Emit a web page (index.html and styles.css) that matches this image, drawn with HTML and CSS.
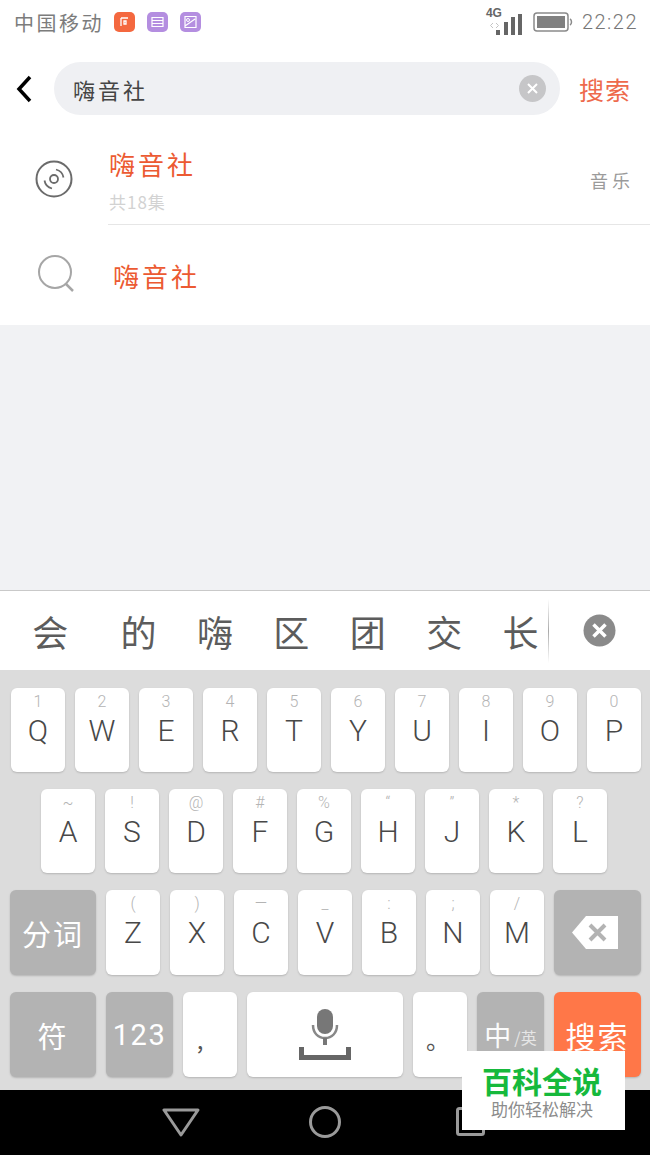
FILE: index.html
```html
<!DOCTYPE html>
<html lang="zh">
<head>
	<meta charset="utf-8">
	<title>嗨音社</title>
	<link rel="stylesheet" href="styles.css">
</head>
<body>
<div class="page">

	<div class="status">
		<span class="carrier">中国移动</span>
		<span class="app-icon orange"><svg width="21" height="20" viewBox="0 0 21 20"><path d="M7 6h7M7 6v8M10 9h2v3h-2z" fill="none" stroke="#fff" stroke-width="1.300"/></svg></span>
		<span class="app-icon purple"><svg width="21" height="20" viewBox="0 0 21 20"><path d="M5 5.500h11v9H5zM5 8.500h11M5 11.500h11" fill="none" stroke="#fff" stroke-width="1.200"/></svg></span>
		<span class="app-icon purple"><svg width="21" height="20" viewBox="0 0 21 20"><path d="M5 4.500h11v11H5zM5 14l10-7" fill="none" stroke="#fff" stroke-width="1.200"/><circle cx="8" cy="8" r="1.500" fill="none" stroke="#fff"/></svg></span>
		<span class="status-right">
			<span class="signal">
				<span class="net">4G</span>
				<svg width="36" height="26" viewBox="0 0 36 26"><path d="M7 14l-2.500 2.500L7 19M10 14l2.500 2.500L10 19" fill="none" stroke="#c4c4c4"/><rect x="10" y="21" width="4" height="5" fill="#666"/><rect x="18" y="13" width="4" height="13" fill="#666"/><rect x="25" y="8" width="4" height="18" fill="#666"/><rect x="32" y="5" width="4" height="21" fill="#666"/></svg>
			</span>
			<svg class="battery" width="40" height="22" viewBox="0 0 40 22"><rect x="1" y="2" width="34" height="18" rx="3" fill="none" stroke="#8a8a8a" stroke-width="1.500"/><rect x="4" y="5" width="28" height="12" fill="#808080"/><path d="M37 8c2 1 2 5 0 6" fill="none" stroke="#8a8a8a" stroke-width="1.500"/></svg>
			<span class="clock">22:22</span>
		</span>
	</div>

	<div class="search-row">
		<svg class="back" width="18" height="28" viewBox="0 0 18 28"><path d="M15 2L4 14l11 12" fill="none" stroke="#000" stroke-width="3.500"/></svg>
		<div class="search-box">
			<span class="query">嗨音社</span>
			<svg width="27" height="27" viewBox="0 0 27 27"><circle cx="13.500" cy="13.500" r="13.500" fill="#c6c6c8"/><path d="M9 9l9 9M18 9l-9 9" stroke="#fff" stroke-width="2"/></svg>
		</div>
		<span class="search-btn">搜索</span>
	</div>

	<div class="results">
		<div class="result">
			<div class="result-icon">
				<svg width="38" height="38" viewBox="0 0 38 38"><circle cx="19" cy="19" r="17.500" fill="none" stroke="#6b6b6b" stroke-width="2"/><circle cx="19" cy="19" r="4" fill="none" stroke="#6b6b6b" stroke-width="1.800"/><path d="M21 9.500a10 10 0 0 1 7.500 8M17 28.500a10 10 0 0 1-7.500-8" fill="none" stroke="#6b6b6b" stroke-width="1.800"/></svg>
			</div>
			<div class="result-body">
				<div class="result-text">
					<div class="result-title">嗨音社</div>
					<div class="result-sub">共18集</div>
				</div>
				<span class="result-tag">音乐</span>
			</div>
		</div>
		<div class="result last">
			<div class="result-icon">
				<svg width="40" height="40" viewBox="0 0 40 40"><circle cx="18" cy="17" r="16" fill="none" stroke="#a6a6a6" stroke-width="2"/><path d="M29 29l7 7" stroke="#a6a6a6" stroke-width="2.500"/></svg>
			</div>
			<div class="result-title plain">嗨音社</div>
		</div>
	</div>

	<div class="blank"></div>

	<div class="candidates">
		<div class="cand-list">
			<span class="cand first">会</span>
			<span class="cand">的</span>
			<span class="cand">嗨</span>
			<span class="cand">区</span>
			<span class="cand">团</span>
			<span class="cand">交</span>
			<span class="cand">长</span>
		</div>
		<div class="cand-line"></div>
		<div class="cand-del">
			<svg width="33" height="33" viewBox="0 0 33 33"><circle cx="16.500" cy="16.500" r="16" fill="#8a8a8a"/><path d="M10.500 10.500l12 12M22.500 10.500l-12 12" stroke="#fff" stroke-width="3.500"/></svg>
		</div>
	</div>

	<div class="keyboard">
		<div class="kb-row top">
			<div class="key"><span class="hint">1</span><span class="letter">Q</span></div>
			<div class="key"><span class="hint">2</span><span class="letter">W</span></div>
			<div class="key"><span class="hint">3</span><span class="letter">E</span></div>
			<div class="key"><span class="hint">4</span><span class="letter">R</span></div>
			<div class="key"><span class="hint">5</span><span class="letter">T</span></div>
			<div class="key"><span class="hint">6</span><span class="letter">Y</span></div>
			<div class="key"><span class="hint">7</span><span class="letter">U</span></div>
			<div class="key"><span class="hint">8</span><span class="letter">I</span></div>
			<div class="key"><span class="hint">9</span><span class="letter">O</span></div>
			<div class="key"><span class="hint">0</span><span class="letter">P</span></div>
		</div>
		<div class="kb-row indent">
			<div class="key"><span class="hint">~</span><span class="letter">A</span></div>
			<div class="key"><span class="hint">!</span><span class="letter">S</span></div>
			<div class="key"><span class="hint">@</span><span class="letter">D</span></div>
			<div class="key"><span class="hint">#</span><span class="letter">F</span></div>
			<div class="key"><span class="hint">%</span><span class="letter">G</span></div>
			<div class="key"><span class="hint">“</span><span class="letter">H</span></div>
			<div class="key"><span class="hint">”</span><span class="letter">J</span></div>
			<div class="key"><span class="hint">*</span><span class="letter">K</span></div>
			<div class="key"><span class="hint">?</span><span class="letter">L</span></div>
		</div>
		<div class="kb-row tall">
			<div class="key fn wide">分词</div>
			<div class="key"><span class="hint">(</span><span class="letter">Z</span></div>
			<div class="key"><span class="hint">)</span><span class="letter">X</span></div>
			<div class="key"><span class="hint">—</span><span class="letter">C</span></div>
			<div class="key"><span class="hint">_</span><span class="letter">V</span></div>
			<div class="key"><span class="hint">:</span><span class="letter">B</span></div>
			<div class="key"><span class="hint">;</span><span class="letter">N</span></div>
			<div class="key"><span class="hint">/</span><span class="letter">M</span></div>
			<div class="key fn widest del">
				<svg width="46" height="33" viewBox="0 0 46 33"><path d="M14 0h32v33H14L0 16.500z" fill="#fff"/><path d="M18 9l15 15M33 9L18 24" stroke="#b3b3b3" stroke-width="4"/></svg>
			</div>
		</div>
		<div class="kb-row tall">
			<div class="key fn wide">符</div>
			<div class="key fn mid num">123</div>
			<div class="key punct comma">,</div>
			<div class="key space">
				<svg width="54" height="52" viewBox="0 0 54 52"><rect x="19" y="0" width="16" height="25" rx="8" fill="#777"/><path d="M15 16c0 8 5 13 12 13s12-5 12-13" fill="none" stroke="#888" stroke-width="2.500"/><path d="M27 29v7" stroke="#777" stroke-width="4"/><path d="M3.500 38v10.500h47V38" fill="none" stroke="#666" stroke-width="5"/></svg>
			</div>
			<div class="key punct period">。</div>
			<div class="key fn mid lang">中<span class="lang-sub">/英</span></div>
			<div class="key fn widest go">搜索</div>
		</div>
	</div>

	<div class="navbar">
		<svg width="38" height="30" viewBox="0 0 38 30"><path d="M2 3h34L19 28z" fill="none" stroke="#9a9a9a" stroke-width="3" stroke-linejoin="round"/></svg>
		<svg width="32" height="32" viewBox="0 0 32 32"><circle cx="16" cy="16" r="14.500" fill="none" stroke="#9a9a9a" stroke-width="3"/></svg>
		<svg class="nav-recent" width="29" height="29" viewBox="0 0 29 29"><rect x="1.500" y="1.500" width="26" height="26" rx="2" fill="none" stroke="#9a9a9a" stroke-width="3"/></svg>
	</div>

	<div class="watermark">
		<div class="wm-title">百科全说</div>
		<div class="wm-sub">助你轻松解决</div>
	</div>

</div>
</body>
</html>
```

FILE: styles.css
```css
body {
	margin: 0;
	padding: 0;
	background-color: #fff;
	font-family: "Noto Sans CJK SC", "Liberation Sans", sans-serif;
}
.page {
	position: relative;
	width: 650px;
	height: 1155px;
	display: flex;
	flex-direction: column;
	overflow: hidden;
}

/* status bar */
.status {
	height: 46px;
	display: flex;
	align-items: center;
	padding: 0 12px 2px 14px;
	box-sizing: border-box;
}
.carrier {
	font-size: 20px;
	letter-spacing: 2.500px;
	color: #7c7c7c;
	margin-right: 10px;
}
.app-icon {
	width: 21px;
	height: 20px;
	border-radius: 5px;
	margin-right: 12px;
	display: flex;
}
.app-icon.orange {
	background-color: #f4683f;
}
.app-icon.purple {
	background-color: #b48ee0;
}
.status-right {
	margin-left: auto;
	display: flex;
	align-items: center;
}
.signal {
	position: relative;
	display: flex;
	margin-right: 11px;
}
.net {
	position: absolute;
	top: -2px;
	left: 0;
	font-family: "Liberation Sans", sans-serif;
	font-size: 12px;
	line-height: 12px;
	font-weight: bold;
	color: #666;
}
.battery {
	margin-right: 9px;
}
.clock {
	font-family: Roboto, sans-serif;
	font-weight: 300;
	font-size: 20px;
	letter-spacing: 1.500px;
	color: #777;
}

/* search */
.search-row {
	display: flex;
	align-items: center;
	padding-top: 16px;
	height: 53px;
}
.back {
	margin-left: 15px;
	margin-right: 21px;
}
.search-box {
	width: 506px;
	height: 53px;
	box-sizing: border-box;
	border-radius: 27px;
	background-color: #eff0f3;
	display: flex;
	align-items: center;
	justify-content: space-between;
	padding: 0 14px 0 19px;
}
.query {
	font-size: 22px;
	letter-spacing: 3px;
	color: #444;
}
.search-btn {
	margin-left: 19px;
	font-size: 25px;
	letter-spacing: 1px;
	color: #ee6a4c;
}

/* results */
.results {
	margin-top: 17px;
}
.result {
	height: 93px;
	display: flex;
}
.result.last {
	height: 100px;
	align-items: center;
}
.result-icon {
	width: 108px;
	display: flex;
	align-items: center;
	justify-content: center;
	flex-shrink: 0;
}
.result.last .result-icon {
	padding-left: 6px;
	box-sizing: border-box;
}
.result-body {
	flex: 1;
	display: flex;
	align-items: center;
	justify-content: space-between;
	border-bottom: 1px solid #e6e6e6;
	padding-right: 16px;
}
.result-text {
	padding-top: 5px;
	padding-left: 1px;
}
.result-title {
	font-size: 26px;
	line-height: 30px;
	letter-spacing: 3px;
	color: #ec5a32;
}
.result-title.plain {
	margin-left: 5px;
	padding-top: 2px;
}
.result-sub {
	margin-top: 13px;
	font-size: 17px;
	line-height: 20px;
	letter-spacing: 1px;
	color: #d2d2d2;
}
.result-tag {
	font-size: 18px;
	letter-spacing: 4px;
	color: #9a9a9a;
	margin-top: 4px;
}
.blank {
	flex: 1;
	background-color: #f1f2f4;
}

/* candidates */
.candidates {
	height: 80px;
	box-sizing: border-box;
	border-top: 1px solid #c9c9c9;
	display: flex;
	align-items: center;
	background-color: #fff;
}
.cand-list {
	width: 548px;
	box-sizing: border-box;
	padding-left: 12px;
	display: flex;
	flex-shrink: 0;
}
.cand {
	width: 76.400px;
	flex-shrink: 0;
	text-align: center;
	font-size: 36px;
	line-height: 76px;
	color: #5c5c5c;
}
.cand.first {
	margin-right: 12px;
}
.cand-line {
	width: 1px;
	height: 64px;
	background: linear-gradient(to bottom, #fff, #aaa 50%, #fff);
}
.cand-del {
	flex: 1;
	display: flex;
	justify-content: center;
}

/* keyboard */
.keyboard {
	height: 420px;
	box-sizing: border-box;
	background-color: #dcdcdc;
	padding: 18px 9px 0 10px;
	display: flex;
	flex-direction: column;
	gap: 17px;
}
.kb-row {
	display: flex;
	gap: 10px;
}
.kb-row.top {
	padding-left: 1px;
}
.kb-row.indent {
	padding-left: 31px;
}
.key {
	width: 54px;
	height: 84px;
	box-sizing: border-box;
	flex-shrink: 0;
	background-color: #fff;
	border-radius: 6px;
	box-shadow: 0 1px 2px rgba(0, 0, 0, 0.18);
	display: flex;
	flex-direction: column;
	align-items: center;
	padding-top: 4px;
	font-family: Roboto, sans-serif;
	font-weight: 300;
}
.kb-row.tall .key {
	height: 85px;
}
.hint {
	font-size: 16px;
	line-height: 20px;
	color: #b4b4b4;
}
.letter {
	font-size: 30px;
	line-height: 38px;
	color: #484848;
}
.key.fn {
	background-color: #b3b3b3;
	color: #fff;
	font-family: "Noto Sans CJK SC", sans-serif;
	font-weight: normal;
	font-size: 29px;
	justify-content: center;
	padding-top: 0;
	flex-direction: row;
	align-items: center;
}
.key.wide {
	width: 86px;
	letter-spacing: 2px;
}
.key.mid {
	width: 67px;
}
.key.widest {
	width: 87px;
}
.key.del {
	padding-right: 6px;
}
.key.num {
	font-family: Roboto, sans-serif;
	font-size: 29px;
	letter-spacing: 1.500px;
}
.key.lang {
	font-size: 27px;
	color: #fbfbfb;
}
.lang-sub {
	font-size: 16px;
	color: #e6e6e6;
	margin-left: 3px;
	margin-top: 4px;
}
.key.go {
	background-color: #ff7748;
	font-size: 30px;
	letter-spacing: 2px;
}
.key.punct {
	justify-content: flex-end;
	font-family: "Noto Sans CJK SC", sans-serif;
	font-weight: normal;
	font-size: 24px;
	line-height: 28px;
	color: #555;
	padding: 0 0 24px;
}
.key.comma {
	padding-right: 20px;
}
.key.period {
	padding-right: 4px;
}
.key.space {
	width: 156px;
	padding-top: 17px;
}

/* nav bar */
.navbar {
	height: 65px;
	box-sizing: border-box;
	background-color: #000;
	position: relative;
	display: flex;
	align-items: center;
	padding: 0 0 2px 162px;
	gap: 109px;
}
.nav-recent {
	margin-left: 6px;
}

/* logo sits over the keyboard */
.watermark {
	position: absolute;
	left: 462px;
	top: 1051px;
	width: 163px;
	height: 79px;
	box-sizing: border-box;
	padding-right: 3px;
	background-color: #fff;
	text-align: center;
	font-family: "Liberation Sans", "Noto Sans CJK SC", sans-serif;
}
.wm-title {
	margin-top: 15px;
	font-size: 30px;
	line-height: 34px;
	font-weight: bold;
	color: #16b93c;
}
.wm-sub {
	font-size: 17px;
	line-height: 22px;
	color: #8c8c8c;
}
```
